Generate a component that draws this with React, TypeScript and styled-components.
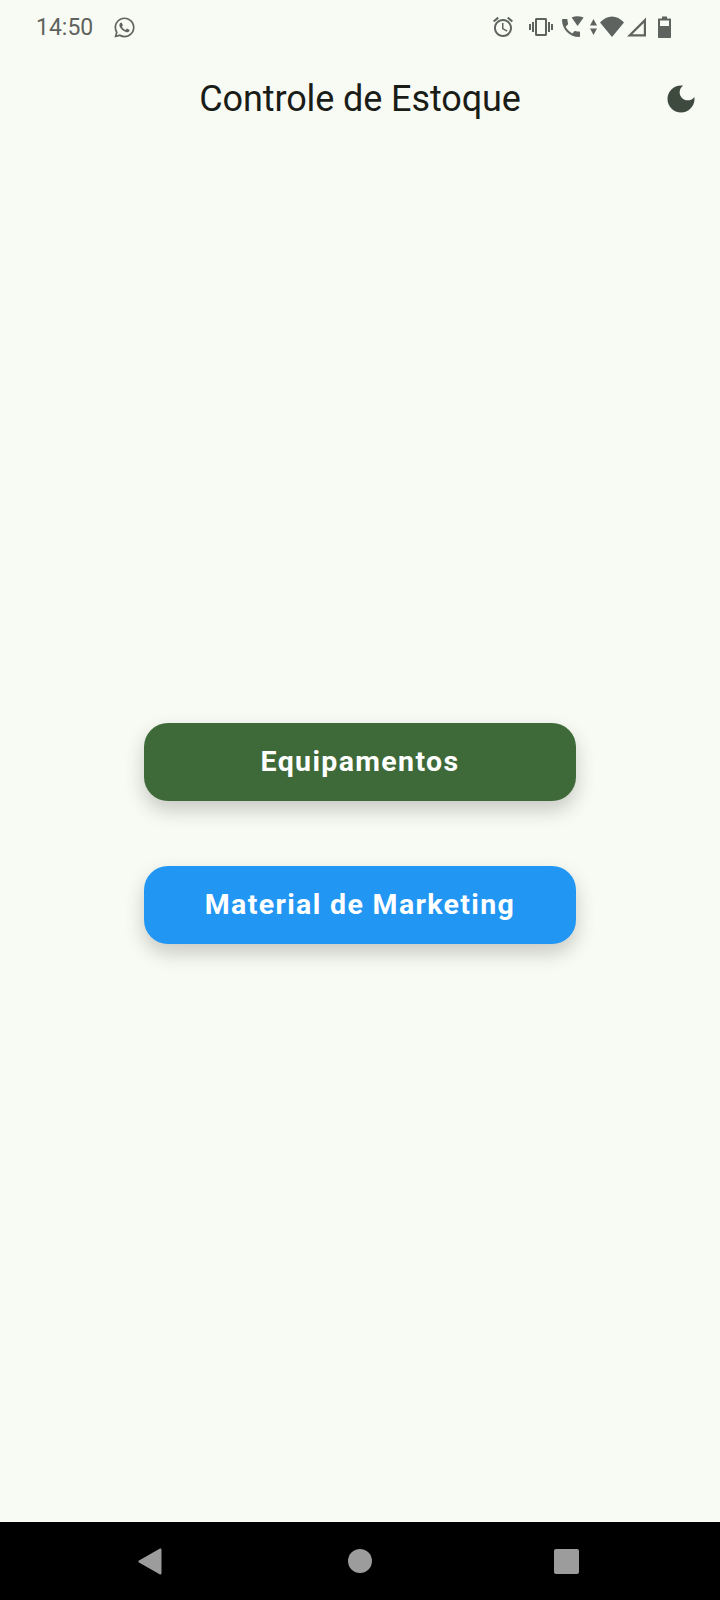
import React from 'react';
import styled, {createGlobalStyle} from 'styled-components';
import {FaWhatsapp} from 'react-icons/fa';

const GlobalStyle = createGlobalStyle`
  html, body {
    margin: 0;
    padding: 0;
    background: #f8fbf3;
    font-family: Roboto, "Noto Sans", sans-serif;
  }
`

const Page = styled.div`
  width: 720px;
  height: 1600px;
  display: flex;
  flex-direction: column;
  background: #f8fbf3;
`

const StatusBar = styled.div`
  height: 48px;
  box-sizing: border-box;
  padding: 6px 48px 0 36px;
  display: flex;
  align-items: center;
  color: #5f635f;
  flex-shrink: 0;
`

const Time = styled.span`
  font-size: 23px;
  font-weight: 400;
  line-height: 1;
  width: 77px;
`

const StatusIcons = styled.div`
  margin-left: auto;
  display: flex;
  align-items: center;
`

const StatusIcon = styled.svg<{$ml?: number}>`
  display: block;
  margin-left: ${props => props.$ml || 0}px;
  fill: #5f635f;
  flex-shrink: 0;
`

const AppBar = styled.header`
  height: 97px;
  display: grid;
  grid-template-columns: 1fr auto 1fr;
  align-items: center;
  padding-right: 21px;
  padding-left: 21px;
  flex-shrink: 0;
`

const Title = styled.h1`
  grid-column: 2;
  margin: 5px 0 0;
  font-size: 36px;
  font-weight: 400;
  letter-spacing: -0.1px;
  line-height: 1;
  color: #1a1c18;
`

const ThemeButton = styled.button`
  justify-self: end;
  width: 36px;
  height: 36px;
  padding: 0;
  border: 0;
  background: none;
  margin-top: 5px;
`

const Main = styled.main`
  flex: 1;
  display: flex;
  flex-direction: column;
  align-items: center;
  justify-content: center;
  gap: 65px;
`

const MenuButton = styled.button<{$color: string}>`
  width: 432px;
  height: 78px;
  border: 0;
  border-radius: 24px;
  background: ${props => props.$color};
  color: #fff;
  font-family: Roboto, sans-serif;
  font-size: 28.5px;
  font-weight: 700;
  letter-spacing: 1.35px;
  padding: 0 0 2px;
  box-shadow: 0 9px 20px rgba(0, 0, 0, 0.2);
`

const NavBar = styled.nav`
  height: 78px;
  background: #000;
  display: flex;
  align-items: center;
  justify-content: space-between;
  padding: 0 141px 0 138px;
  flex-shrink: 0;
`

const NavBack = styled.svg`
  display: block;
  width: 24px;
  height: 27px;
`

const NavHome = styled.div`
  width: 24px;
  height: 24px;
  margin-left: 3px;
  border-radius: 50%;
  background: #9c9c9c;
`

const NavRecent = styled.div`
  width: 25px;
  height: 25px;
  border-radius: 2px;
  background: #9c9c9c;
`

export default function App() {
    return (
        <Page>
            <GlobalStyle/>
            <StatusBar>
                <Time>14:50</Time>
                <FaWhatsapp size={23} color="#5f635f"/>
                <StatusIcons>
                    {/* alarm */}
                    <StatusIcon width="24" height="24" viewBox="0 0 24 24">
                        <path d="M22 5.72l-4.6-3.86-1.29 1.53 4.6 3.86L22 5.72zM7.88 3.39L6.6 1.86 2 5.71l1.29 1.53 4.59-3.85zM12.5 8H11v6l4.75 2.85.75-1.23-4-2.37V8zM12 4c-4.97 0-9 4.03-9 9s4.03 9 9 9 9-4.03 9-9-4.03-9-9-9zm0 16c-3.87 0-7-3.13-7-7s3.13-7 7-7 7 3.13 7 7-3.13 7-7 7z"/>
                    </StatusIcon>
                    {/* vibrate */}
                    <StatusIcon $ml={14} width="24" height="24" viewBox="0 0 24 24">
                        <path d="M0 15h2V9H0v6zm3 2h2V7H3v10zm19-8v6h2V9h-2zm-3 8h2V7h-2v10zM16.5 3h-9C6.67 3 6 3.67 6 4.5v15c0 .83.67 1.5 1.5 1.5h9c.83 0 1.5-.67 1.5-1.5v-15c0-.83-.67-1.5-1.5-1.5zM16 19H8V5h8v14z"/>
                    </StatusIcon>
                    {/* call + wifi calling */}
                    <StatusIcon $ml={6} width="26" height="24" viewBox="0 0 26 24">
                        <path d="M6.62 11.79c1.44 2.83 3.76 5.14 6.59 6.59l2.2-2.2c.27-.27.67-.36 1.02-.24 1.12.37 2.33.57 3.57.57.55 0 1 .45 1 1V21c0 .55-.45 1-1 1-9.39 0-17-7.61-17-17 0-.55.45-1 1-1h3.5c.55 0 1 .45 1 1 0 1.25.2 2.45.57 3.57.11.35.03.74-.25 1.02l-2.2 2.2z"/>
                        <path d="M12.6 2.6c3.6-1.9 7.6-1.9 12 0l-6 8.4z"/>
                    </StatusIcon>
                    {/* up/down arrows */}
                    <StatusIcon $ml={4} width="9" height="18" viewBox="0 0 9 18">
                        <path d="M4.500 1L8 7.500H1zM4.500 17L1 10.500h7z"/>
                    </StatusIcon>
                    {/* wifi */}
                    <StatusIcon $ml={2} width="24" height="24" viewBox="0 0 24 24">
                        <path d="M0 7.500C7-.5 17-.5 24 7.500L12 22z"/>
                    </StatusIcon>
                    {/* signal */}
                    <StatusIcon $ml={2} width="21" height="24" viewBox="0 0 21 24">
                        <path d="M1 21.500L20 2.500v19zm5.400-2.200H17.800V7.900z" fillRule="evenodd"/>
                    </StatusIcon>
                    {/* battery */}
                    <StatusIcon $ml={10} width="15" height="24" viewBox="0 0 15 24">
                        <path d="M5 1.500h5v2h3.200c.6 0 .8.4.8.8v18c0 .5-.3.8-.8.8H1.800c-.5 0-.8-.3-.8-.8v-18c0-.4.300-.8.800-.8H5zM3 5.500v5.500h9V5.500z" fillRule="evenodd"/>
                    </StatusIcon>
                </StatusIcons>
            </StatusBar>
            <AppBar>
                <Title>Controle de Estoque</Title>
                <ThemeButton aria-label="Tema">
                    <svg width="36" height="36" viewBox="0 0 24 24" fill="#3f4a3f">
                        <path d="M12 3c-4.970 0-9 4.030-9 9s4.030 9 9 9 9-4.030 9-9c0-.46-.04-.92-.1-1.360-.98 1.370-2.580 2.260-4.400 2.260-2.980 0-5.400-2.420-5.400-5.400 0-1.810.89-3.420 2.260-4.400-.44-.06-.9-.1-1.360-.1z"/>
                    </svg>
                </ThemeButton>
            </AppBar>
            <Main>
                <MenuButton $color="#3e6a39">Equipamentos</MenuButton>
                <MenuButton $color="#2196f3">Material de Marketing</MenuButton>
            </Main>
            <NavBar>
                <NavBack viewBox="0 0 24 27">
                    <path d="M22 .5c.8-.2 1.500.300 1.500 1.200v23.600c0 .9-.7 1.400-1.500 1.100L1 14.600c-.8-.5-.8-1.700 0-2.200z" fill="#9c9c9c"/>
                </NavBack>
                <NavHome/>
                <NavRecent/>
            </NavBar>
        </Page>
    );
}
